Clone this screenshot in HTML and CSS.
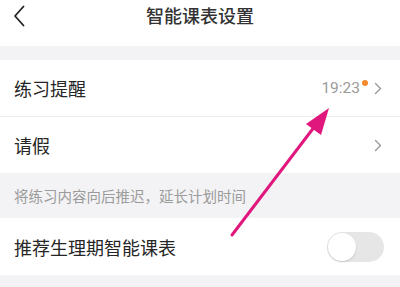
FILE: index.html
```html
<!DOCTYPE html>
<html lang="zh-CN">
<head>
    <meta charset="UTF-8">
    <meta name="viewport" content="width=device-width, initial-scale=1.0">
    <title>智能课表设置</title>
    <link rel="stylesheet" href="styles.css">
</head>
<body>
    <div class="page">
        <header class="topbar">
            <div class="back">
                <svg width="12" height="22" viewBox="0 0 12 22">
                    <path d="M10.5 1.5 L2 11 L10.5 20.5" fill="none" stroke="#222" stroke-width="1.8" stroke-linecap="round" stroke-linejoin="round"/>
                </svg>
            </div>
            <h1>智能课表设置</h1>
            <div></div>
        </header>

        <div class="gap"></div>

        <div class="group">
            <div class="row row-line">
                <span class="label">练习提醒</span>
                <div class="extra">
                    <span class="time">19:23</span>
                    <span class="dot"></span>
                    <svg class="arrow-right" width="8" height="13" viewBox="0 0 8 13">
                        <path d="M1.5 1.5 L6.5 6.5 L1.5 11.5" fill="none" stroke="#999" stroke-width="1.4" stroke-linecap="round" stroke-linejoin="round"/>
                    </svg>
                </div>
            </div>
            <div class="row">
                <span class="label">请假</span>
                <div class="extra">
                    <svg class="arrow-right" width="8" height="13" viewBox="0 0 8 13">
                        <path d="M1.5 1.5 L6.5 6.5 L1.5 11.5" fill="none" stroke="#999" stroke-width="1.4" stroke-linecap="round" stroke-linejoin="round"/>
                    </svg>
                </div>
            </div>
        </div>

        <p class="note">将练习内容向后推迟，延长计划时间</p>

        <div class="group">
            <div class="row row-toggle">
                <span class="label">推荐生理期智能课表</span>
                <div class="switch"><span class="knob"></span></div>
            </div>
        </div>

        <svg class="pointer" width="400" height="287" viewBox="0 0 400 287">
            <line x1="232" y1="235" x2="318" y2="122" stroke="#e0187e" stroke-width="3" stroke-linecap="round"/>
            <polygon points="329,108 306,124 321,135" fill="#e0187e"/>
        </svg>
    </div>
</body>
</html>
```

FILE: styles.css
```css
* {
    box-sizing: border-box;
    margin: 0;
    padding: 0;
}
body {
    background: #f3f3f5;
    font-family: "Noto Sans CJK SC", "Noto Sans", sans-serif;
    color: #222;
    overflow: hidden;
}
.page {
    position: relative;
    width: 400px;
    height: 287px;
}
.topbar {
    height: 46px;
    background: white;
    display: grid;
    grid-template-columns: 60px 1fr 60px;
    align-items: center;
}
.back {
    padding-left: 13px;
    padding-bottom: 14px;
    display: flex;
}
.topbar h1 {
    text-align: center;
    font-size: 18px;
    font-weight: 500;
    color: #333;
    padding-bottom: 16px;
}
.gap {
    height: 14px;
}
.group {
    background: white;
}
.row {
    height: 56px;
    padding: 0 18px 0 14px;
    display: flex;
    align-items: center;
    justify-content: space-between;
}
.row-line {
    height: 57px;
    border-bottom: 1px solid #ececec;
}
.label {
    font-size: 18px;
    color: #262626;
}
.extra {
    display: flex;
    align-items: center;
}
.time {
    font-family: "Roboto", "Liberation Sans", sans-serif;
    font-size: 15.5px;
    color: #9a9a9a;
}
.dot {
    width: 6px;
    height: 6px;
    border-radius: 50%;
    background: #f28a2e;
    margin: 0 6px 11px 2px;
}
.arrow-right {
    display: block;
}
.note {
    height: 45px;
    padding: 0 14px;
    display: flex;
    align-items: center;
    font-size: 14.5px;
    color: #9b9b9b;
}
.row-toggle {
    height: 57px;
    padding-right: 16px;
}
.switch {
    width: 57px;
    height: 30px;
    border-radius: 15px;
    background: #e6e6e6;
    padding: 1px;
}
.knob {
    display: block;
    width: 28px;
    height: 28px;
    border-radius: 50%;
    background: white;
    box-shadow: 0 1px 2px rgba(0,0,0,0.15);
}
.pointer {
    position: absolute;
    left: 0;
    top: 0;
    pointer-events: none;
}
```
